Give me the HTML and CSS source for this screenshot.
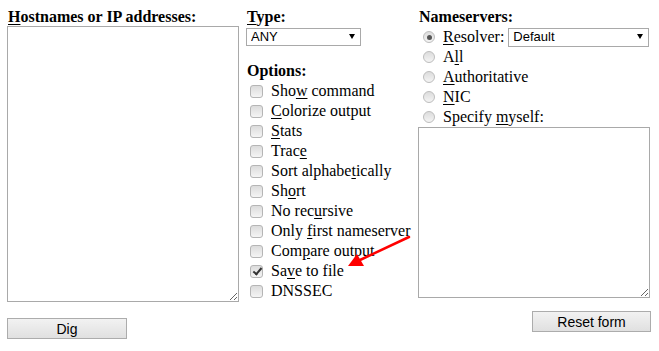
FILE: index.html
```html
<!DOCTYPE html>
<html lang="en">

<head>
  <meta charset="UTF-8" />
  <title>Dig - Web interface</title>
  <meta name="viewport" content="width=device-width, initial-scale=1.0" />
  <link rel="stylesheet" href="styles.css">
</head>

<body>
  <form class="dig-form">
    <!-- hostnames -->
    <div class="col col-hosts">
      <label class="heading" for="hosts"><u>H</u>ostnames or IP addresses:</label>
      <textarea id="hosts" class="hosts-box"></textarea>
      <button type="button" class="btn btn-dig">Dig</button>
    </div>

    <!-- type + options -->
    <div class="col col-opts">
      <label class="heading" for="type"><u>T</u>ype:</label>
      <span class="select-wrap type-select">
        <select id="type">
          <option>ANY</option>
          <option>A</option>
          <option>AAAA</option>
          <option>MX</option>
        </select>
      </span>

      <div class="heading options-title">Options:</div>
      <label class="opt"><input type="checkbox"><span>Sho<u>w</u> command</span></label>
      <label class="opt"><input type="checkbox"><span><u>C</u>olorize output</span></label>
      <label class="opt"><input type="checkbox"><span><u>S</u>tats</span></label>
      <label class="opt"><input type="checkbox"><span>Trac<u>e</u></span></label>
      <label class="opt"><input type="checkbox"><span>Sort alphabe<u>t</u>ically</span></label>
      <label class="opt"><input type="checkbox"><span>Sh<u>o</u>rt</span></label>
      <label class="opt"><input type="checkbox"><span>No rec<u>u</u>rsive</span></label>
      <label class="opt"><input type="checkbox"><span>Only <u>f</u>irst nameserver</span></label>
      <label class="opt"><input type="checkbox"><span>Com<u>p</u>are output</span></label>
      <label class="opt"><input type="checkbox" checked><span>Sa<u>v</u>e to file</span></label>
      <label class="opt"><input type="checkbox"><span>DNSSEC</span></label>
    </div>

    <!-- nameservers -->
    <div class="col col-ns">
      <div class="heading">Nameservers:</div>
      <label class="opt opt-first">
        <input type="radio" name="ns" checked><span><u>R</u>esolver:</span>
        <span class="select-wrap resolver-select">
          <select>
            <option>Default</option>
          </select>
        </span>
      </label>
      <label class="opt"><input type="radio" name="ns"><span>A<u>l</u>l</span></label>
      <label class="opt"><input type="radio" name="ns"><span><u>A</u>uthoritative</span></label>
      <label class="opt"><input type="radio" name="ns"><span><u>N</u>IC</span></label>
      <label class="opt"><input type="radio" name="ns"><span>Specify <u>m</u>yself:</span></label>
      <textarea class="ns-box"></textarea>
      <div class="reset-row">
        <button type="reset" class="btn btn-reset">Reset form</button>
      </div>
    </div>
  </form>

  <!-- annotation arrow pointing at "Save to file" -->
  <svg class="arrow" width="70" height="40" viewBox="0 0 70 40">
    <line x1="64" y1="3" x2="15" y2="26" stroke="#f00" stroke-width="2.5" stroke-linecap="round" />
    <polygon points="3,32 12,20 19,32" fill="#f00" />
  </svg>
</body>

</html>
```

FILE: styles.css
```css
body {
  margin: 0;
  padding: 8px 0 0 7px;
  background: #fff;
  color: #000;
  font-family: "Liberation Serif", "Times New Roman", serif;
  font-size: 16px;
}

.dig-form {
  display: flex;
  align-items: flex-start;
}

.col {
  display: flex;
  flex-direction: column;
  align-items: flex-start;
}

.col-hosts {
  width: 232px;
  margin-right: 7px;
}

.col-opts {
  width: 172px;
}

.col-ns {
  width: 232px;
}

.heading {
  font-weight: bold;
  line-height: 18px;
  padding-left: 1px;
}

u {
  text-decoration: underline;
  text-underline-offset: 2px;
}

/* text boxes */
textarea {
  box-sizing: border-box;
  border: 1px solid #a9a9a9;
  background: #fff;
  margin: 0;
  padding: 2px;
  font-family: "Liberation Mono", monospace;
}

.hosts-box {
  width: 232px;
  height: 276px;
}

.ns-box {
  width: 232px;
  height: 171px;
}

/* selects */
.select-wrap {
  position: relative;
  display: inline-block;
}

.select-wrap select {
  appearance: none;
  box-sizing: border-box;
  height: 18px;
  margin: 0;
  padding: 0 0 0 4px;
  border: 1px solid #a9a9a9;
  border-radius: 0;
  background: #fff;
  color: #000;
  font-family: "Liberation Sans", Arial, sans-serif;
  font-size: 13px;
  line-height: 16px;
}

.select-wrap::after {
  content: "";
  position: absolute;
  right: 6px;
  top: 7px;
  border-left: 3.5px solid transparent;
  border-right: 3.5px solid transparent;
  border-top: 5px solid #000;
  pointer-events: none;
}

.type-select {
  margin-top: 1px;
}

.type-select select {
  width: 115px;
}

.resolver-select {
  margin-left: 4px;
}

.resolver-select select {
  width: 141px;
  height: 19px;
}

.options-title {
  margin-top: 16px;
  margin-bottom: 1px;
}

/* checkbox / radio rows */
.opt {
  display: flex;
  align-items: center;
  height: 20px;
  white-space: nowrap;
}

.opt-first {
  margin-top: 1px;
}

.opt input {
  appearance: none;
  flex: none;
  margin: 0 8px 0 4px;
  width: 13px;
  height: 13px;
  border: 1px solid #b5b5b5;
  background: linear-gradient(#dcdcdc, #f4f4f4);
  position: relative;
}

.opt input[type="checkbox"] {
  border-radius: 3px;
}

.opt input[type="checkbox"]:checked::after {
  content: "";
  position: absolute;
  left: 3.5px;
  top: 0.5px;
  width: 3px;
  height: 7px;
  border-right: 2.5px solid #333;
  border-bottom: 2.5px solid #333;
  transform: rotate(40deg);
}

.col-ns .opt input {
  margin: 0 8px 0 5px;
  width: 12px;
  height: 12px;
  border-radius: 50%;
  border-color: #bdbdbd;
}

.col-ns .opt input:checked::after {
  content: "";
  position: absolute;
  left: 2.5px;
  top: 2.5px;
  width: 5px;
  height: 5px;
  border-radius: 50%;
  background: #555;
}

/* buttons */
.btn {
  box-sizing: border-box;
  height: 21px;
  margin: 0;
  padding: 0;
  border: 1px solid #acacac;
  border-radius: 0;
  background: linear-gradient(#f2f2f2, #e0e0e0);
  color: #000;
  font-family: "Liberation Sans", Arial, sans-serif;
  font-size: 14px;
}

.btn-dig {
  width: 120px;
  margin-top: 16px;
}

.reset-row {
  align-self: stretch;
  display: flex;
  justify-content: flex-end;
  margin-top: 13px;
}

.btn-reset {
  width: 119px;
  margin-right: -1px;
}

/* annotation overlay */
.arrow {
  position: absolute;
  left: 345px;
  top: 234px;
}
```
